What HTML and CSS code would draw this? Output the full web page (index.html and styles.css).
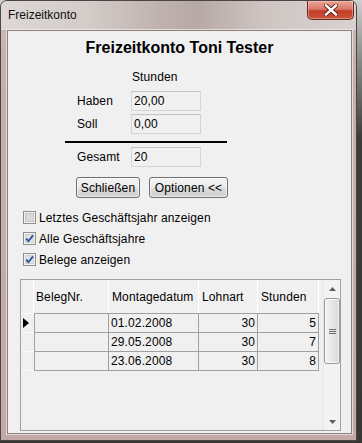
FILE: index.html
```html
<!DOCTYPE html>
<html>
<head>
<meta charset="utf-8">
<link rel="stylesheet" href="styles.css">
</head>
<body>
<div class="window">
  <div class="titlebar">
    <span class="title">Freizeitkonto</span>
    <div class="close">
      <svg width="14" height="12" viewBox="0 0 14 12"><path d="M2 1.5 L12 10.5 M12 1.5 L2 10.5" stroke="#5a1c14" stroke-width="4.2" stroke-linecap="square"/><path d="M2 1.5 L12 10.5 M12 1.5 L2 10.5" stroke="#ffffff" stroke-width="2.4" stroke-linecap="square"/></svg>
    </div>
  </div>
  <div class="frame-body">
    <div class="client">
      <h1 class="heading">Freizeitkonto Toni Tester</h1>
      <div class="form">
        <div class="row head"><span class="lbl"></span><span class="colhead">Stunden</span></div>
        <div class="row"><span class="lbl">Haben</span><span class="box">20,00</span></div>
        <div class="row gap"><span class="lbl">Soll</span><span class="box">0,00</span></div>
        <div class="rule"></div>
        <div class="row"><span class="lbl">Gesamt</span><span class="box">20</span></div>
      </div>
      <div class="buttons">
        <button class="btn btn-close">Schließen</button>
        <button class="btn btn-opt">Optionen &lt;&lt;</button>
      </div>
      <div class="checks">
        <div class="check">
          <svg class="cb" width="13" height="13" viewBox="0 0 13 13"><rect x="0.5" y="0.5" width="12" height="12" fill="#f4f4f4" stroke="#8f8f8f"/><rect x="2.5" y="2.5" width="8" height="8" fill="#d9d9d9" stroke="#c4c4c4"/></svg>
          <span>Letztes Geschäftsjahr anzeigen</span>
        </div>
        <div class="check">
          <svg class="cb" width="13" height="13" viewBox="0 0 13 13"><rect x="0.5" y="0.5" width="12" height="12" fill="#f4f4f4" stroke="#8f8f8f"/><rect x="2.5" y="2.5" width="8" height="8" fill="#e2e2e2" stroke="#cfcfcf"/><path d="M3.2 6.6 L5.4 9.2 L10 3.4" fill="none" stroke="#2b4f9e" stroke-width="1.8"/></svg>
          <span>Alle Geschäftsjahre</span>
        </div>
        <div class="check">
          <svg class="cb" width="13" height="13" viewBox="0 0 13 13"><rect x="0.5" y="0.5" width="12" height="12" fill="#f4f4f4" stroke="#8f8f8f"/><rect x="2.5" y="2.5" width="8" height="8" fill="#e2e2e2" stroke="#cfcfcf"/><path d="M3.2 6.6 L5.4 9.2 L10 3.4" fill="none" stroke="#2b4f9e" stroke-width="1.8"/></svg>
          <span>Belege anzeigen</span>
        </div>
      </div>
      <div class="grid">
        <div class="table">
          <div class="tr header">
            <div class="ind"></div>
            <div class="th c1">BelegNr.</div>
            <div class="th c2">Montagedatum</div>
            <div class="th c3">Lohnart</div>
            <div class="th c4">Stunden</div>
          </div>
          <div class="tr">
            <div class="ind cur"><svg width="6" height="10" viewBox="0 0 6 10"><path d="M0 0 L6 5 L0 10 Z" fill="#000"/></svg></div>
            <div class="td c1"></div>
            <div class="td c2">01.02.2008</div>
            <div class="td c3 num">30</div>
            <div class="td c4 num">5</div>
          </div>
          <div class="tr">
            <div class="ind"></div>
            <div class="td c1"></div>
            <div class="td c2">29.05.2008</div>
            <div class="td c3 num">30</div>
            <div class="td c4 num">7</div>
          </div>
          <div class="tr last">
            <div class="ind"></div>
            <div class="td c1"></div>
            <div class="td c2">23.06.2008</div>
            <div class="td c3 num">30</div>
            <div class="td c4 num">8</div>
          </div>
        </div>
        <div class="vscroll">
          <div class="sbtn"><svg width="7" height="4" viewBox="0 0 7 4"><path d="M0 4 L3.5 0 L7 4 Z" fill="#5c5c5c"/></svg></div>
          <div class="thumb"><div class="grip"></div><div class="grip"></div><div class="grip"></div></div>
          <div class="sbtn down"><svg width="7" height="4" viewBox="0 0 7 4"><path d="M0 0 L3.5 4 L7 0 Z" fill="#5c5c5c"/></svg></div>
        </div>
      </div>
    </div>
  </div>
</div>
</body>
</html>
```
FILE: styles.css
```css
html, body {
  margin: 0;
  padding: 0;
}
body {
  width: 362px;
  height: 443px;
  overflow: hidden;
  background: linear-gradient(to bottom, #cfcfcf 0, #8a8a8a 60px, #3e3a3a 140px, #3a3636 100%);
  font-family: "Liberation Sans", Arial, sans-serif;
  font-size: 12px;
  letter-spacing: 0.12px;
  color: #000;
}
.window {
  width: 357px;
  height: 441px;
  box-sizing: border-box;
  border: 1px solid #4d4443;
  border-radius: 7px 7px 0 0;
  background: linear-gradient(to bottom, #cdbfbc 0, #c6b0ad 60px, #c2a9a7 100%);
  display: flex;
  flex-direction: column;
  overflow: hidden;
}
.titlebar {
  height: 29px;
  flex: none;
  display: flex;
  align-items: flex-start;
  justify-content: space-between;
  background: linear-gradient(to right, #ddd8d6 0%, #d3cbc8 25%, #bfb2ae 45%, #b7a9a5 55%, #cfc6c3 75%, #d8d2d0 100%);
}
.title {
  padding-left: 7px;
  line-height: 29px;
  font-size: 12px;
  letter-spacing: 0;
  color: #101010;
}
.close {
  width: 47px;
  height: 19px;
  margin-right: 2px;
  box-sizing: border-box;
  border: 1px solid #5e2a22;
  border-top: none;
  border-radius: 0 0 5px 5px;
  background: linear-gradient(to bottom, #e9a596 0%, #d9786a 45%, #c43b26 55%, #c9553c 100%);
  box-shadow: inset 0 0 0 1px rgba(255, 210, 200, 0.45);
  display: flex;
  align-items: center;
  justify-content: center;
}
.frame-body {
  flex: 1;
  display: flex;
  padding: 0 4px 6px 6px;
}
.client {
  flex: 1;
  border: 1px solid #8f7d7b;
  box-shadow: 0 0 0 1px rgba(255, 255, 255, 0.55);
  background: #f0f0f0;
  display: flex;
  flex-direction: column;
}
.heading {
  margin: 7px 0 0 0;
  font-size: 16px;
  line-height: 20px;
  letter-spacing: 0;
  font-weight: bold;
  text-align: center;
}
.form {
  margin: 12px 0 0 57px;
  width: 162px;
  display: flex;
  flex-direction: column;
}
.row {
  display: flex;
  align-items: center;
  padding-left: 12px;
  height: 20px;
}
.row.head {
  height: 14px;
  margin-bottom: 7px;
}
.row.gap {
  margin-top: 3px;
}
.lbl {
  width: 54px;
  flex: none;
}
.colhead {
  padding-left: 1px;
}
.box {
  width: 70px;
  height: 20px;
  box-sizing: border-box;
  border: 1px solid #d5d5d5;
  border-top-color: #c4c4c4;
  padding-left: 2px;
  line-height: 18px;
  background: #f0f0f0;
}
.rule {
  height: 2px;
  background: #000;
  margin: 7px 0 4px 0;
}
.buttons {
  display: flex;
  gap: 9px;
  margin: 10px 0 0 68px;
}
.btn {
  height: 21px;
  padding: 0;
  margin: 0;
  border: 1px solid #707070;
  border-radius: 3px;
  background: linear-gradient(to bottom, #f3f3f3 0%, #ebebeb 48%, #dddddd 52%, #cfcfcf 100%);
  font-family: "Liberation Sans", Arial, sans-serif;
  font-size: 12px;
  letter-spacing: 0.12px;
  color: #000;
  box-shadow: inset 0 0 0 1px rgba(255, 255, 255, 0.6);
}
.btn-close {
  width: 64px;
}
.btn-opt {
  width: 79px;
}
.checks {
  margin: 9px 0 0 15px;
  display: flex;
  flex-direction: column;
}
.check {
  height: 21px;
  display: flex;
  align-items: center;
  gap: 3px;
}
.cb {
  flex: none;
}
.grid {
  margin: 9px 0 0 12px;
  width: 321px;
  height: 152px;
  box-sizing: border-box;
  border: 1px solid #a0a0a0;
  display: flex;
  background: #f0f0f0;
}
.table {
  width: 300px;
  flex: none;
}
.tr {
  display: flex;
  height: 19px;
}
.tr.header {
  height: 33px;
}
.ind {
  width: 13px;
  flex: none;
  box-sizing: border-box;
  border-top: 1px solid #fafafa;
  display: flex;
  align-items: center;
  padding-left: 2px;
}
.header .ind {
  border-top: none;
  border-right: 1px solid #ffffff;
}
.c1 { width: 75px; }
.c2 { width: 90px; }
.c3 { width: 59px; }
.c4 { width: 61px; }
.th, .td {
  flex: none;
  box-sizing: border-box;
  white-space: nowrap;
}
.th {
  display: flex;
  align-items: center;
  padding-left: 3px;
  border-right: 1px solid #ffffff;
}
.th.c1 {
  padding-left: 2px;
}
.td {
  border-top: 1px solid #a0a0a0;
  border-right: 1px solid #a0a0a0;
  padding: 0 3px;
  line-height: 18px;
}
.td.c1 {
  border-left: 1px solid #a0a0a0;
}
.td.c2 {
  padding-left: 2px;
}
.last .td {
  height: 20px;
  border-bottom: 1px solid #a0a0a0;
}
.last .ind {
  height: 20px;
  border-bottom: 1px solid #fafafa;
}
.num {
  text-align: right;
  padding-right: 2px;
}
.vscroll {
  flex: 1;
  margin-left: 2px;
  display: flex;
  flex-direction: column;
  background: #f3f3f3;
  border-left: 1px solid #e6e6e6;
}
.sbtn {
  height: 17px;
  flex: none;
  display: flex;
  align-items: center;
  justify-content: center;
}
.sbtn.down {
  margin-top: auto;
}
.thumb {
  margin: 1px 0 0 0;
  width: 16px;
  height: 66px;
  box-sizing: border-box;
  border: 1px solid #979797;
  border-radius: 3px;
  background: linear-gradient(to right, #f4f4f4 0%, #e7e7e7 50%, #d9d9d9 100%);
  box-shadow: inset 0 0 0 1px rgba(255, 255, 255, 0.7);
  display: flex;
  flex-direction: column;
  align-items: center;
  justify-content: center;
  gap: 1px;
}
.grip {
  width: 7px;
  height: 1px;
  background: #6e6e6e;
}
```
